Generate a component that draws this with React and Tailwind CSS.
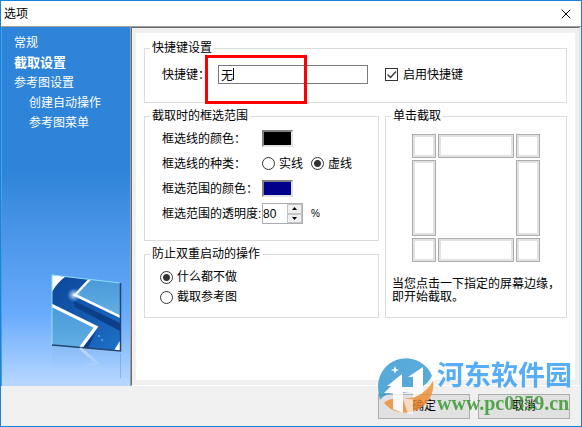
import { useState } from "react";
import { X } from "lucide-react";

const menuItems = [
  { label: "常规" },
  { label: "截取设置", active: true },
  { label: "参考图设置" },
  { label: "创建自动操作", nested: true },
  { label: "参考图菜单", nested: true },
];

const edges = [
  "左上",
  "上",
  "右上",
  "左",
  null,
  "右",
  "左下",
  "下",
  "右下",
];

function Group({ title, className = "", children }) {
  return (
    <fieldset className={`min-w-0 border border-[#dcdcdc] ${className}`}>
      <legend className="ml-[5px] px-0.5 leading-[14px]">{title}</legend>
      {children}
    </fieldset>
  );
}

function Radio({ name, label, checked, onChange }) {
  return (
    <label className="flex items-center gap-1">
      <input
        type="radio"
        name={name}
        checked={checked}
        onChange={onChange}
        className="size-[13px] appearance-none rounded-full border border-[#333] bg-white checked:bg-[radial-gradient(circle,#333_3px,white_4px)]"
      />
      {label}
    </label>
  );
}

function ColorButton({ label, className }) {
  return (
    <button
      type="button"
      aria-label={label}
      className={`h-[17px] w-[31px] border-2 border-t-[#808080] border-r-[#e3e3e3] border-b-[#e3e3e3] border-l-[#808080] ${className}`}
    />
  );
}

function SidebarLogo() {
  return (
    <svg viewBox="0 0 72 106" className="h-[106px] w-[72px]" aria-hidden="true">
      <defs>
        <linearGradient id="tile" x1="0" y1="0" x2="0" y2="1">
          <stop offset="0" stopColor="#4a98d8" />
          <stop offset="1" stopColor="#62b0e4" />
        </linearGradient>
        <linearGradient id="band" x1="0" y1="0" x2="1" y2="1">
          <stop offset="0" stopColor="#0c469c" />
          <stop offset="0.5" stopColor="#1559ae" />
          <stop offset="1" stopColor="#1e74cc" />
        </linearGradient>
        <linearGradient id="fade" x1="0" y1="70" x2="0" y2="100" gradientUnits="userSpaceOnUse">
          <stop offset="0" stopColor="#fff" stopOpacity="0.5" />
          <stop offset="0.8" stopColor="#fff" stopOpacity="0" />
        </linearGradient>
        <radialGradient id="glow">
          <stop offset="0" stopColor="#fff" stopOpacity="0.9" />
          <stop offset="1" stopColor="#9cd0ff" stopOpacity="0" />
        </radialGradient>
        <clipPath id="face">
          <path d="M1 1 69 9V77L1 71Z" />
        </clipPath>
        <mask id="fadeMask">
          <rect y="70" width="72" height="36" fill="url(#fade)" />
        </mask>
      </defs>
      <g clipPath="url(#face)">
        <path d="M0 0H72V80H0Z" fill="url(#band)" />
        <path d="M23 27 69 49V57L24 33Z" fill="#0b3f88" />
        <path d="M45 58 35 78H27Z" fill="#0b3f88" />
        <path d="M0 0H18Q6 8 1 18Z" fill="#fff" />
        <path d="M40 4 24 21 70 43V8Z" fill="url(#tile)" />
        <path d="M40 4 24 21 70 43" fill="none" stroke="#fff" strokeWidth="2.5" />
        <path d="M0 31 46 53 29 76H0Z" fill="url(#tile)" />
        <path d="M0 31 45 53 28 76" fill="none" stroke="#fff" strokeWidth="3.2" />
        <path d="M70 65 62 78H72Z" fill="#fff" />
        <circle cx="23" cy="21" r="7" fill="url(#glow)" />
        <circle cx="48" cy="62" r="1" fill="#5fa9ee" />
        <circle cx="51" cy="66" r="1" fill="#5fa9ee" />
      </g>
      <path d="M1 71V1L69 9" fill="none" stroke="#8fe0f5" strokeWidth="1" />
      <path d="M69.5 9V77L1 71" fill="none" stroke="#23456b" strokeWidth="1.5" />
      <g mask="url(#fadeMask)">
        <path d="M1 72 69 79V106H1Z" fill="#86b8ee" />
        <path d="M29 74 46 89 1 104" fill="none" stroke="#fff" strokeWidth="3" />
      </g>
      <path d="M69.5 79V104" stroke="#5f86b8" strokeOpacity="0.4" />
    </svg>
  );
}

function Watermark() {
  return (
    <div className="pointer-events-none absolute right-[9px] bottom-[11px] flex items-center gap-0.5 opacity-80">
      <svg viewBox="0 0 58 58" className="size-[58px]" aria-hidden="true">
        <path d="M1 29A28 28 0 0 1 55 19Q46 36 20 36 8 36 3 43 1 36 1 29Z" fill="#2f96d2" />
        <path d="M56 24A28 28 0 0 1 7 46Q12 41 22 42 46 42 56 24Z" fill="#f08a2c" />
        <path
          d="M7 36 14 29H10L25 17V30H36V20H31L46 10V36L36 41V35H26V56L16 52V36Z"
          fill="#fff"
        />
        <path d="M26 42H36V57H31Z" fill="#fff" fillOpacity="0.7" />
        <path d="m18 9 1 3 3 1-3 1-1 3-1-3-3-1 3-1Z" fill="#fff" />
      </svg>
      <div>
        <p className="text-[27px] leading-[34px] font-bold text-[#2e9bf5]">河东软件园</p>
        <p className="font-['Liberation_Serif',serif] text-[20px] leading-5 font-bold text-[#2f9428]">
          www.pc0359.cn
        </p>
      </div>
    </div>
  );
}

export default function App() {
  const [hotkey, setHotkey] = useState("无");
  const [enabled, setEnabled] = useState(true);
  const [lineStyle, setLineStyle] = useState("dashed");
  const [opacity, setOpacity] = useState(80);
  const [restart, setRestart] = useState("none");

  return (
    <div className="relative flex min-h-screen flex-col border border-[#1883d7] bg-[#f0f0f0] font-['Liberation_Sans','Noto_Sans_CJK_SC',sans-serif] text-[12px] leading-4 text-black">
      <header className="flex h-[26px] items-center justify-between border-b border-[#a0a0a0] bg-white pr-[7px] pl-[3px]">
        <h1>选项</h1>
        <button type="button" aria-label="关闭">
          <X size={16} strokeWidth={1.5} />
        </button>
      </header>

      <div className="flex flex-1">
        <nav className="flex w-[130px] shrink-0 flex-col justify-between border-r border-l border-r-[#a0a0a0] border-l-[#4a9bea] bg-linear-to-b from-[#2e84d9] from-40% via-[#69abfc] via-80% to-[#b8d8ff]">
          <ul className="pt-1.5 pl-3 leading-5 text-white">
            {menuItems.map((item) => (
              <li key={item.label} className={item.nested ? "pl-[15px]" : ""}>
                <a href="#" className={item.active ? "text-[13px] font-bold" : ""}>
                  {item.label}
                </a>
              </li>
            ))}
          </ul>
          <div className="flex justify-end pr-[7px] pb-1.5">
            <SidebarLogo />
          </div>
        </nav>

        <main className="mr-px flex flex-1 flex-col border border-t-[#696969] border-r-[#e3e3e3] border-b-white border-l-[#696969] p-1 pt-[5px] pb-[5px]">
          <div className="grid flex-1 grid-cols-[235fr_182fr] content-start gap-1.5 bg-white px-2 pt-2">
            <Group title="快捷键设置" className="col-span-2 h-[62px]">
              <div className="flex items-center pt-2.5 pl-[17px]">
                <label htmlFor="hotkey" className="w-14">
                  快捷键：
                </label>
                <div className="relative">
                  <input
                    id="hotkey"
                    value={hotkey}
                    onChange={(e) => setHotkey(e.target.value)}
                    className="block h-[19px] w-[150px] border border-[#7a7a7a] px-0.5 caret-transparent outline-none"
                  />
                  <span className="absolute top-[3px] left-[15px] h-3 w-px bg-black" />
                </div>
                <label className="ml-[17px] flex items-center gap-[5px]">
                  <input
                    type="checkbox"
                    checked={enabled}
                    onChange={(e) => setEnabled(e.target.checked)}
                    className="peer size-[13px] appearance-none border border-[#333] bg-white"
                  />
                  <svg
                    viewBox="0 0 13 13"
                    className="pointer-events-none -ml-[18px] hidden size-[13px] peer-checked:block"
                    fill="none"
                    stroke="#333"
                    strokeWidth="1.3"
                  >
                    <path d="m2.5 6.5 3 3 5.5-6" />
                  </svg>
                  启用快捷键
                </label>
              </div>
            </Group>

            <div className="flex flex-col gap-1.5">
              <Group title="截取时的框选范围" className="h-[132px]">
                <div className="grid auto-rows-[25px] grid-cols-[100px_1fr] items-center pt-[3px] pl-[17px]">
                  <span>框选线的颜色：</span>
                  <ColorButton label="框选线的颜色" className="bg-black" />

                  <span>框选线的种类：</span>
                  <div className="flex gap-2">
                    <Radio
                      name="line"
                      label="实线"
                      checked={lineStyle === "solid"}
                      onChange={() => setLineStyle("solid")}
                    />
                    <Radio
                      name="line"
                      label="虚线"
                      checked={lineStyle === "dashed"}
                      onChange={() => setLineStyle("dashed")}
                    />
                  </div>

                  <span>框选范围的颜色：</span>
                  <ColorButton label="框选范围的颜色" className="bg-[#00008b]" />

                  <label htmlFor="opacity" className="whitespace-nowrap">
                    框选范围的透明度:
                  </label>
                  <div className="flex items-center gap-2">
                    <div className="flex h-[21px] w-[41px] border border-[#abadb3] bg-white">
                      <input
                        id="opacity"
                        value={opacity}
                        onChange={(e) => setOpacity(Number(e.target.value) || 0)}
                        className="w-6 leading-4 outline-none"
                      />
                      <div className="flex w-[15px] flex-col">
                        <button
                          type="button"
                          aria-label="增加"
                          onClick={() => setOpacity(opacity + 1)}
                          className="flex flex-1 items-center justify-center border border-[#c4c4c4] bg-[#f0f0f0]"
                        >
                          <svg viewBox="0 0 5 3" className="h-[3px] w-[5px]">
                            <path d="M0 3 2.5 0 5 3Z" />
                          </svg>
                        </button>
                        <button
                          type="button"
                          aria-label="减少"
                          onClick={() => setOpacity(opacity - 1)}
                          className="flex flex-1 items-center justify-center border border-[#c4c4c4] bg-[#f0f0f0]"
                        >
                          <svg viewBox="0 0 5 3" className="h-[3px] w-[5px]">
                            <path d="M0 0 2.5 3 5 0Z" />
                          </svg>
                        </button>
                      </div>
                    </div>
                    <span className="text-[10px]">%</span>
                  </div>
                </div>
              </Group>

              <Group title="防止双重启动的操作" className="h-[71px]">
                <div className="flex flex-col gap-1 pt-2 pl-[15px]">
                  <Radio
                    name="restart"
                    label="什么都不做"
                    checked={restart === "none"}
                    onChange={() => setRestart("none")}
                  />
                  <Radio
                    name="restart"
                    label="截取参考图"
                    checked={restart === "capture"}
                    onChange={() => setRestart("capture")}
                  />
                </div>
              </Group>
            </div>

            <Group title="单击截取">
              <div className="mt-[11px] grid grid-cols-[24px_76px_24px] grid-rows-[24px_76px_24px] justify-center gap-0.5">
                {edges.map((edge) =>
                  edge ? (
                    <button
                      key={edge}
                      type="button"
                      aria-label={edge}
                      className="border border-[#adadad] bg-white inset-ring-2 inset-ring-[#e1e1e1]"
                    />
                  ) : (
                    <span key="center" />
                  )
                )}
              </div>
              <p className="mt-4 pl-1.5 leading-[13px] whitespace-nowrap">
                当您点击一下指定的屏幕边缘，
                <br />
                即开始截取。
              </p>
            </Group>
          </div>
        </main>
      </div>

      <footer className="flex h-10 items-center justify-end gap-2 pr-[11px]">
        <button type="button" className="h-[25px] w-[92px] border border-[#adadad] bg-[#e1e1e1]">
          确定
        </button>
        <button type="button" className="h-[25px] w-[92px] border border-[#adadad] bg-[#e1e1e1]">
          取消
        </button>
      </footer>

      <div className="pointer-events-none absolute top-[54px] left-[204px] h-[49px] w-[102px] border-3 border-[#ff0000]" />
      <Watermark />
    </div>
  );
}
